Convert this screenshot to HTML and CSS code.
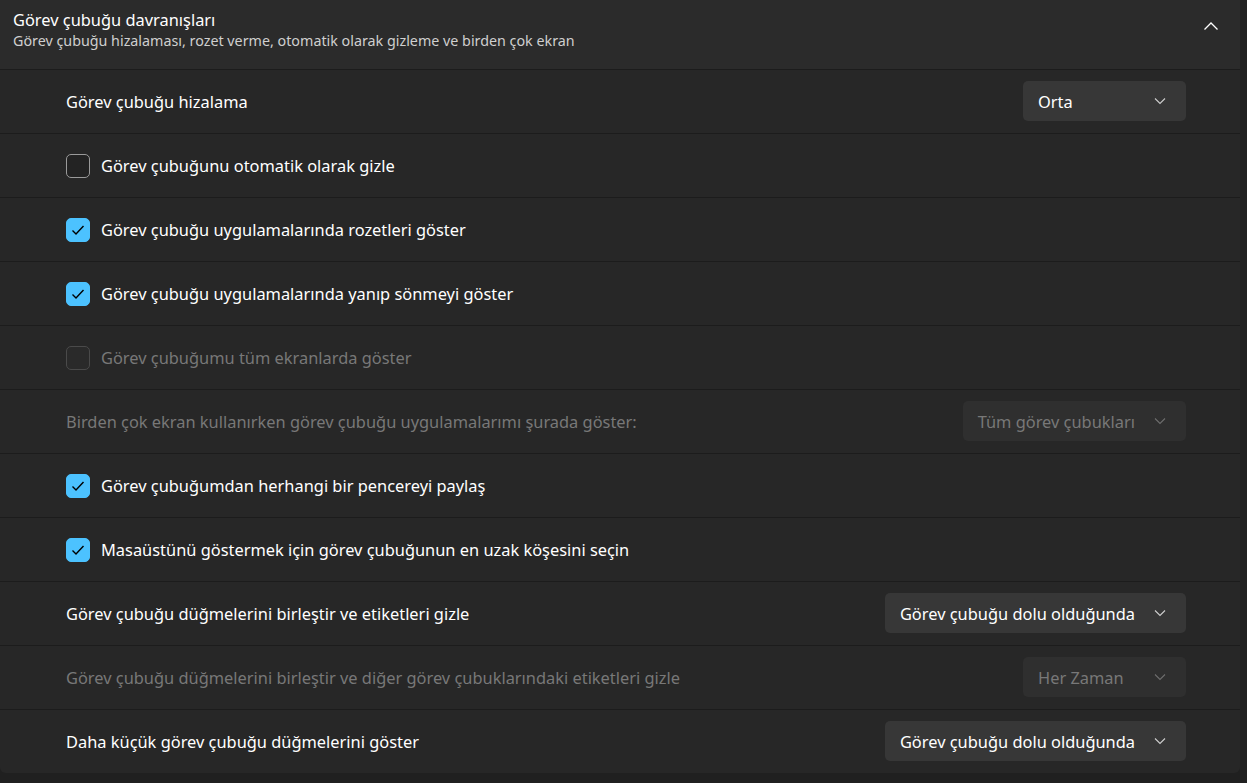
FILE: index.html
```html
<!DOCTYPE html>
<html lang="tr">
<head>
    <meta charset="UTF-8">
    <meta name="viewport" content="width=device-width, initial-scale=1.0">
    <title>Görev çubuğu davranışları</title>
    <link rel="stylesheet" href="styles.css">
</head>
<body>
    <div class="panel">
        <div class="panel-header">
            <div>
                <div class="panel-title">Görev çubuğu davranışları</div>
                <div class="panel-subtitle">Görev çubuğu hizalaması, rozet verme, otomatik olarak gizleme ve birden çok ekran</div>
            </div>
            <svg class="collapse-icon" width="16" height="10" viewBox="0 0 16 10"><path d="M1.5 8.5 L8 2 L14.5 8.5" fill="none" stroke="#fff" stroke-width="1.3"/></svg>
        </div>

        <div class="row">
            <span class="label">Görev çubuğu hizalama</span>
            <div class="select">Orta <svg class="chev" width="12" height="8" viewBox="0 0 12 8"><path d="M1 1.5 L6 6.5 L11 1.5" fill="none" stroke="#cfcfcf" stroke-width="1.1"/></svg></div>
        </div>

        <div class="row">
            <span class="check"></span>
            <span class="label">Görev çubuğunu otomatik olarak gizle</span>
        </div>

        <div class="row">
            <span class="check checked"><svg width="14" height="12" viewBox="0 0 14 12"><path d="M1.5 6.5 L5 10 L12.5 2" fill="none" stroke="#000" stroke-width="1.4"/></svg></span>
            <span class="label">Görev çubuğu uygulamalarında rozetleri göster</span>
        </div>

        <div class="row">
            <span class="check checked"><svg width="14" height="12" viewBox="0 0 14 12"><path d="M1.5 6.5 L5 10 L12.5 2" fill="none" stroke="#000" stroke-width="1.4"/></svg></span>
            <span class="label">Görev çubuğu uygulamalarında yanıp sönmeyi göster</span>
        </div>

        <div class="row disabled">
            <span class="check"></span>
            <span class="label">Görev çubuğumu tüm ekranlarda göster</span>
        </div>

        <div class="row disabled">
            <span class="label">Birden çok ekran kullanırken görev çubuğu uygulamalarımı şurada göster:</span>
            <div class="select">Tüm görev çubukları <svg class="chev" width="12" height="8" viewBox="0 0 12 8"><path d="M1 1.5 L6 6.5 L11 1.5" fill="none" stroke="#6e6e6e" stroke-width="1.1"/></svg></div>
        </div>

        <div class="row">
            <span class="check checked"><svg width="14" height="12" viewBox="0 0 14 12"><path d="M1.5 6.5 L5 10 L12.5 2" fill="none" stroke="#000" stroke-width="1.4"/></svg></span>
            <span class="label">Görev çubuğumdan herhangi bir pencereyi paylaş</span>
        </div>

        <div class="row">
            <span class="check checked"><svg width="14" height="12" viewBox="0 0 14 12"><path d="M1.5 6.5 L5 10 L12.5 2" fill="none" stroke="#000" stroke-width="1.4"/></svg></span>
            <span class="label">Masaüstünü göstermek için görev çubuğunun en uzak köşesini seçin</span>
        </div>

        <div class="row">
            <span class="label">Görev çubuğu düğmelerini birleştir ve etiketleri gizle</span>
            <div class="select">Görev çubuğu dolu olduğunda <svg class="chev" width="12" height="8" viewBox="0 0 12 8"><path d="M1 1.5 L6 6.5 L11 1.5" fill="none" stroke="#cfcfcf" stroke-width="1.1"/></svg></div>
        </div>

        <div class="row disabled">
            <span class="label">Görev çubuğu düğmelerini birleştir ve diğer görev çubuklarındaki etiketleri gizle</span>
            <div class="select">Her Zaman <svg class="chev" width="12" height="8" viewBox="0 0 12 8"><path d="M1 1.5 L6 6.5 L11 1.5" fill="none" stroke="#6e6e6e" stroke-width="1.1"/></svg></div>
        </div>

        <div class="row">
            <span class="label">Daha küçük görev çubuğu düğmelerini göster</span>
            <div class="select">Görev çubuğu dolu olduğunda <svg class="chev" width="12" height="8" viewBox="0 0 12 8"><path d="M1 1.5 L6 6.5 L11 1.5" fill="none" stroke="#cfcfcf" stroke-width="1.1"/></svg></div>
        </div>
    </div>
</body>
</html>
```

FILE: styles.css
```css
body {
    margin: 0;
    background: #202020;
    font-family: "Noto Sans", "Open Sans", sans-serif;
    color: #fff;
    height: 783px;
    overflow: hidden;
}
.panel {
    width: 1240px;
    background: #272727;
    border-radius: 0 0 6px 6px;
    overflow: hidden;
}
.panel-header {
    box-sizing: border-box;
    border-bottom: 1px solid #1c1c1c;
    height: 70px;
    padding: 8px 21px 0 13px;
    display: flex;
    justify-content: space-between;
    align-items: flex-start;
    background: #2b2b2b;
}
.panel-title {
    font-size: 16.4px;
    line-height: 23px;
}
.panel-subtitle {
    font-size: 14.3px;
    color: #cfcfcf;
    line-height: 20px;
}
.collapse-icon {
    margin-top: 13px;
}
.row {
    height: 64px;
    box-sizing: border-box;
    border-bottom: 1px solid #1c1c1c;
    padding: 0 54px 0 66px;
    display: flex;
    align-items: center;
    font-size: 16.4px;
}
.row:last-child {
    border-bottom: none;
    height: 63px;
}
.label {
    flex: 1;
    white-space: nowrap;
}
.check {
    width: 24px;
    height: 24px;
    box-sizing: border-box;
    border: 1px solid #9a9a9a;
    border-radius: 5px;
    background: #232323;
    margin-right: 11px;
    display: flex;
    align-items: center;
    justify-content: center;
}
.check.checked {
    background: #4cc2ff;
    border-color: #4cc2ff;
}
.select {
    min-width: 163px;
    height: 40px;
    margin-top: -1px;
    box-sizing: border-box;
    background: #373737;
    border-radius: 5px;
    padding: 0 20px 0 15px;
    display: flex;
    align-items: center;
    justify-content: space-between;
    gap: 19px;
    white-space: nowrap;
}
.disabled {
    color: #787878;
}
.disabled .check {
    border-color: #4a4a4a;
    background: #2a2a2a;
}
.disabled .select {
    background: #2f2f2f;
}
```
